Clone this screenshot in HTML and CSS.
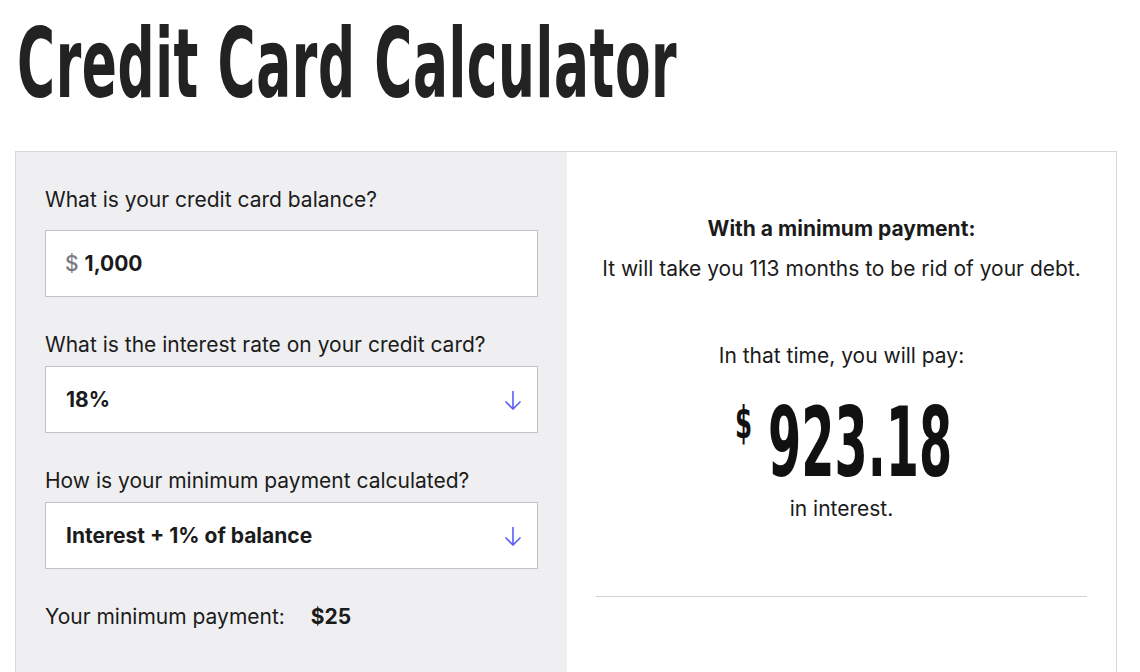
FILE: index.html
```html
<!DOCTYPE html>
<html lang="en">
<head>
    <meta charset="UTF-8">
    <meta name="viewport" content="width=device-width, initial-scale=1.0">
    <title>Credit Card Calculator</title>
    <link rel="stylesheet" href="styles.css">
</head>
<body>

    <h1 class="page-title">Credit Card Calculator</h1>

    <div class="calculator">
        <!-- Inputs -->
        <div class="calc-form">
            <div class="field field-first">
                <label>What is your credit card balance?</label>
                <div class="input-box">
                    <span class="currency">$</span>
                    <span class="value">1,000</span>
                </div>
            </div>

            <div class="field">
                <label>What is the interest rate on your credit card?</label>
                <div class="input-box select-box">
                    <span class="value">18%</span>
                    <svg class="arrow" width="20" height="20" viewBox="0 0 20 20">
                        <path d="M10 1 V19 M2.5 11.5 L10 19 L17.5 11.5" fill="none" stroke="#5b5ef2" stroke-width="1.6"/>
                    </svg>
                </div>
            </div>

            <div class="field">
                <label>How is your minimum payment calculated?</label>
                <div class="input-box select-box">
                    <span class="value">Interest + 1% of balance</span>
                    <svg class="arrow" width="20" height="20" viewBox="0 0 20 20">
                        <path d="M10 1 V19 M2.5 11.5 L10 19 L17.5 11.5" fill="none" stroke="#5b5ef2" stroke-width="1.6"/>
                    </svg>
                </div>
            </div>

            <div class="min-payment">
                <span>Your minimum payment:</span>
                <strong>$25</strong>
            </div>
        </div>

        <!-- Result -->
        <div class="calc-result">
            <p class="result-head">With a minimum payment:</p>
            <p>It will take you 113 months to be rid of your debt.</p>
            <p class="pay-label">In that time, you will pay:</p>
            <div class="amount">
                <span class="amount-sign">$</span>
                <span class="amount-num">923.18</span>
            </div>
            <p class="interest-note">in interest.</p>
            <hr class="divider">
        </div>
    </div>

</body>
</html>
```

FILE: styles.css
```css
/* Global Style */
* {
    margin: 0;
    padding: 0;
    box-sizing: border-box;
}
body {
    background: #fff;
    color: #1b1b1b;
    font-family: 'Inter', 'Liberation Sans', sans-serif;
    padding: 0 23px 0 15px;
}
.page-title {
    display: inline-block;
    white-space: nowrap;
    font-family: 'DejaVu Sans Condensed', 'DejaVu Sans', sans-serif;
    font-weight: bold;
    font-size: 96px;
    line-height: 120px;
    color: #222;
    transform: scaleX(0.6);
    transform-origin: left center;
    margin-top: 4px;
    margin-left: 2px;
    letter-spacing: 1px;
}
.calculator {
    display: grid;
    grid-template-columns: 551px 1fr;
    border: 1px solid #d6d6da;
    margin-top: 27px;
    height: 560px;
}
/* Left side */
.calc-form {
    background: #efeff1;
    padding: 35px 29px 0 29px;
}
.field {
    margin-bottom: 35px;
}
label {
    display: block;
    font-size: 21px;
    line-height: 26px;
    margin-bottom: 8px;
}
.field-first label {
    margin-bottom: 17px;
}
.input-box {
    display: flex;
    align-items: center;
    gap: 6px;
    height: 67px;
    width: 493px;
    background: #fff;
    border: 1px solid #c2c2c6;
    padding: 0 14px 0 19px;
    font-size: 21px;
}
.currency {
    color: #7a7a84;
    font-weight: 500;
}
.value {
    font-weight: bold;
}
.select-box {
    justify-content: space-between;
    padding-left: 20px;
}
.arrow {
    display: block;
}
.min-payment {
    font-size: 21px;
    line-height: 26px;
    margin-top: 1px;
}
.min-payment strong {
    margin-left: 20px;
}
/* Right side */
.calc-result {
    background: #fff;
    text-align: center;
    padding: 64px 29px 0 29px;
    font-size: 21px;
    line-height: 26px;
}
.result-head {
    font-weight: bold;
    margin-bottom: 14px;
}
.pay-label {
    margin-top: 61px;
}
.amount {
    display: flex;
    justify-content: center;
    align-items: flex-start;
    gap: 18px;
    margin-top: 26px;
    height: 96px;
}
.amount-sign {
    font-family: 'DejaVu Sans Condensed', 'DejaVu Sans', sans-serif;
    font-weight: bold;
    font-size: 44px;
    line-height: 48px;
    color: #111;
    margin-top: 4px;
    width: 15px;
    display: inline-block;
    transform: scaleX(0.62);
    transform-origin: left center;
}
.amount-num {
    display: inline-block;
    width: 181px;
    white-space: nowrap;
    text-align: left;
    font-family: 'DejaVu Sans Condensed', 'DejaVu Sans', sans-serif;
    font-weight: bold;
    font-size: 96px;
    line-height: 96px;
    color: #111;
    transform: scaleX(0.553);
    transform-origin: left center;
}
.interest-note {
    margin-top: 5px;
}
.divider {
    border: none;
    border-top: 1px solid #d3d3d7;
    margin-top: 74px;
}
```
